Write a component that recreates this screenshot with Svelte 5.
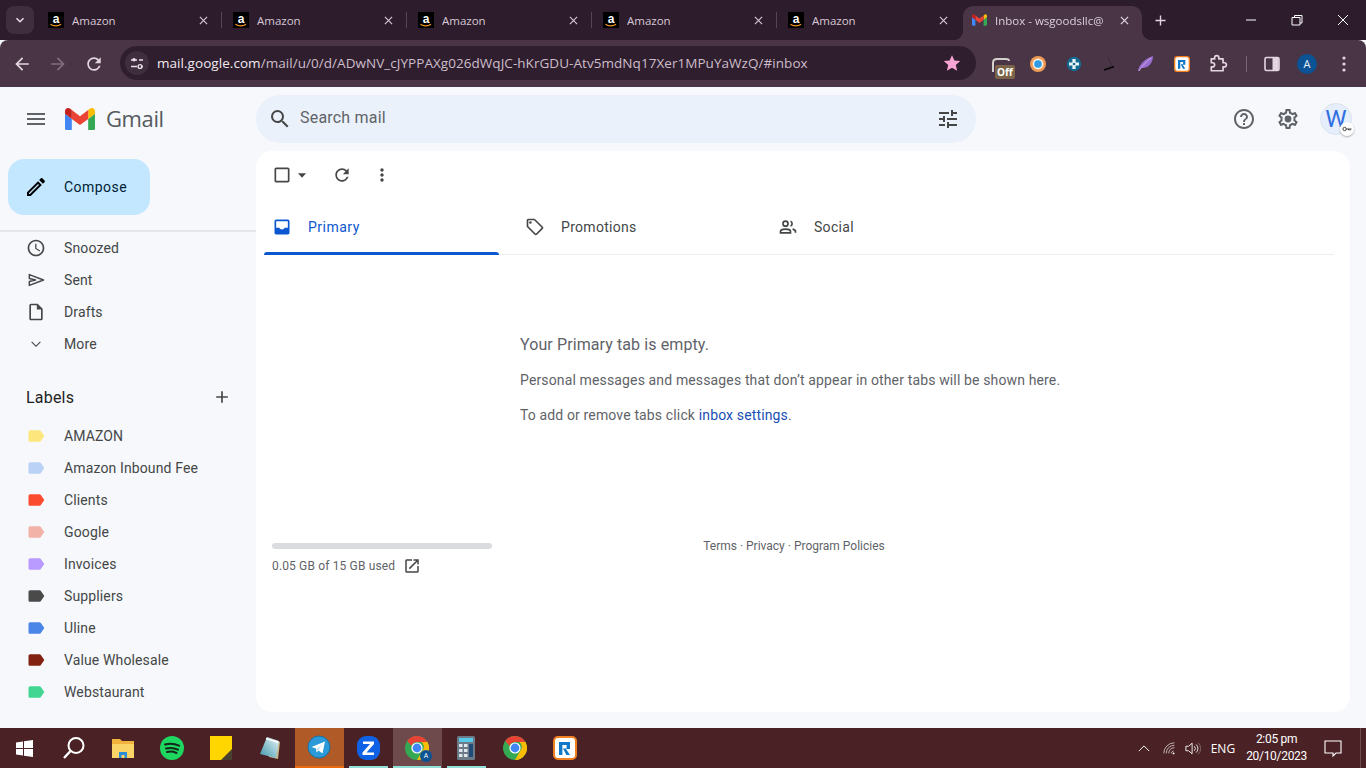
<script>
  const tabs = [1, 2, 3, 4, 5];
  const nav = [
    { t: 'Snoozed', d: 'M11.99 2C6.47 2 2 6.48 2 12s4.47 10 9.99 10C17.52 22 22 17.52 22 12S17.52 2 11.99 2zM12 20c-4.42 0-8-3.58-8-8s3.58-8 8-8 8 3.58 8 8-3.58 8-8 8zm.5-13H11v6l5.25 3.15.75-1.23-4.5-2.67z', fill: '#444746' },
    { t: 'Sent', d: 'M4 5.500 21 12 4 18.500V13.800l7.500-1.800L4 10.200z', fill: 'none' },
    { t: 'Drafts', d: 'M14 2H6c-1.1 0-2 .9-2 2v16c0 1.1.89 2 1.99 2H18c1.1 0 2-.9 2-2V8l-6-6zM6 20V4h7v5h5v11H6z', fill: '#444746' },
    { t: 'More', d: 'M16.800 9 12 13.800 7.200 9 6.300 9.900l5.700 5.700 5.700-5.700z', fill: '#444746' }
  ];
  const labels = [
    ['AMAZON', '#fde67c'], ['Amazon Inbound Fee', '#b9d2f6'], ['Clients', '#fb4c2f'], ['Google', '#f2b2a8'],
    ['Invoices', '#b99aff'], ['Suppliers', '#4a4a4a'], ['Uline', '#4a86e8'], ['Value Wholesale', '#822111'], ['Webstaurant', '#43d692']
  ];
  const labelPath = 'M17.63 5.84C17.27 5.33 16.67 5 16 5L5 5.01C3.9 5.01 3 5.9 3 7v10c0 1.1.9 1.99 2 1.99L16 19c.67 0 1.27-.33 1.63-.84L22 12l-4.37-6.16z';
</script>

{#snippet amazon()}
  <svg class="fav" viewBox="0 0 16 16">
    <rect width="16" height="16" fill="#000" />
    <text x="8" y="11" text-anchor="middle" class="az">a</text>
    <path d="M2.500 12.300c3 2.200 7.500 2.200 10.500 0" fill="none" stroke="#f79a1e" stroke-width="1.300" />
  </svg>
{/snippet}

{#snippet gmailM(cls)}
  <svg class={cls} viewBox="52 42 88 66">
    <path fill="#4285f4" d="M58 108h14V74L52 59v43c0 3.32 2.69 6 6 6" />
    <path fill="#34a853" d="M120 108h14c3.32 0 6-2.69 6-6V59l-20 15" />
    <path fill="#fbbc04" d="M120 48v26l20-15v-8c0-7.42-8.47-11.65-14.4-7.2" />
    <path fill="#ea4335" d="M72 74V48l24 18 24-18v26L96 92" />
    <path fill="#c5221f" d="M52 51v8l20 15V48l-5.6-4.2c-5.94-4.45-14.4-.22-14.4 7.2" />
  </svg>
{/snippet}

{#snippet chrome()}
  <svg class="tb-icon" viewBox="0 0 24 24">
    <circle cx="12" cy="12" r="12" fill="#34a853" />
    <path d="M12 0a12 12 0 0 1 10.4 6H12a6 6 0 0 0-5.6 3.8L2.2 5A12 12 0 0 1 12 0z" fill="#ea4335" />
    <path d="M22.4 6A12 12 0 0 1 12 24l5.2-9a6 6 0 0 0-.8-9z" fill="#fbbc04" />
    <circle cx="12" cy="12" r="5.600" fill="#fff" />
    <circle cx="12" cy="12" r="4.400" fill="#4285f4" />
  </svg>
{/snippet}

{#snippet rLogo(cls)}
  <svg class={cls} viewBox="0 0 24 24">
    <rect x="1" y="1" width="22" height="22" rx="4" fill="#fff" stroke="#f08020" stroke-width="2" />
    <path d="M6 19V6h11v7h-4l4 6h-3.600L10 12.400h3.600V9H9.400v10z" fill="#0f78c8" />
  </svg>
{/snippet}

<div class="screen">
  <div class="tabstrip">
    <button class="tab-search" aria-label="Search tabs">
      <svg class="i10" viewBox="0 0 10 10"><path d="M1.500 3.200 5 6.700l3.500-3.500" fill="none" stroke="#e8dce6" stroke-width="1.600" /></svg>
    </button>
    {#each tabs as t}
      <div class="tab">
        {@render amazon()}
        <span class="tab-title">Amazon</span>
        <svg class="x" viewBox="0 0 10 10"><path d="M1 1l8 8M9 1l-8 8" stroke="#d6c6d3" stroke-width="1.300" /></svg>
      </div>
    {/each}
    <div class="tab active">
      {@render gmailM('fav-m')}
      <span class="tab-title">Inbox - wsgoodsllc@</span>
      <svg class="x" viewBox="0 0 10 10"><path d="M1 1l8 8M9 1l-8 8" stroke="#e4d6e1" stroke-width="1.300" /></svg>
    </div>
    <svg class="newtab" viewBox="0 0 12 12"><path d="M6 .5v11M.5 6h11" stroke="#e4d6e1" stroke-width="1.500" /></svg>
    <div class="winctl">
      <svg class="ctl" viewBox="0 0 12 12"><path d="M1 6h10" stroke="#fff" stroke-width="1" /></svg>
      <svg class="ctl" viewBox="0 0 12 12"><path d="M3.500 3V1.500h7.500V9H9M1 3.500h8v7.500H1z" fill="none" stroke="#fff" stroke-width="1" /></svg>
      <svg class="ctl" viewBox="0 0 12 12"><path d="M1 1l10 10M11 1L1 11" stroke="#fff" stroke-width="1" /></svg>
    </div>
  </div>

  <div class="toolbar">
    <div class="navbtns">
      <svg class="tool" viewBox="0 0 24 24"><path d="M20 11H7.830l5.590-5.590L12 4l-8 8 8 8 1.410-1.410L7.830 13H20v-2z" fill="#e4d6e1" /></svg>
      <svg class="tool" viewBox="0 0 24 24"><path d="M12 4l-1.410 1.410L16.170 11H4v2h12.170l-5.580 5.590L12 20l8-8z" fill="#7f6c7c" /></svg>
      <svg class="tool" viewBox="0 0 24 24"><path d="M17.650 6.350C16.200 4.900 14.210 4 12 4c-4.420 0-7.990 3.580-7.990 8s3.570 8 7.990 8c3.730 0 6.840-2.550 7.730-6h-2.080c-.82 2.330-3.040 4-5.650 4-3.310 0-6-2.690-6-6s2.690-6 6-6c1.660 0 3.140.69 4.220 1.780L13 11h7V4l-2.350 2.350z" fill="#e4d6e1" /></svg>
    </div>
    <div class="omnibox">
      <span class="site">
        <svg class="i16" viewBox="0 0 16 16"><path d="M2 5h6M2 11.500h6M12 11.500h2" stroke="#eadfe8" stroke-width="1.500" /><circle cx="5" cy="4.800" r="1.700" fill="#eadfe8" /><circle cx="11" cy="11.500" r="1.900" fill="none" stroke="#eadfe8" stroke-width="1.400" /><path d="M10 5h4" stroke="#eadfe8" stroke-width="1.500" /></svg>
      </span>
      <span class="url"><b>mail.google.com</b>/mail/u/0/d/ADwNV_cJYPPAXg026dWqJC-hKrGDU-Atv5mdNq17Xer1MPuYaWzQ/#inbox</span>
      <svg class="star" viewBox="0 0 24 24"><path d="M12 1.500l3.200 7.100 7.700.8-5.800 5.200 1.700 7.600L12 18.300l-6.800 3.900 1.700-7.600L1.100 9.400l7.700-.8z" fill="#f8a5d6" /></svg>
    </div>
    <div class="exts">
      <span class="ext off">
        <svg class="i20" viewBox="0 0 20 20"><path d="M1 16V7q0-4 4-4h9q3 0 3 2" fill="none" stroke="#d4d0cc" stroke-width="2" /></svg>
        <span class="offbadge">Off</span>
      </span>
      <span class="ext"><svg class="i18" viewBox="0 0 18 18"><circle cx="9" cy="9" r="8" fill="#ee9a55" /><circle cx="9" cy="9" r="5.400" fill="#f8f0e2" /><circle cx="9" cy="9" r="3.800" fill="#2e9be6" /></svg></span>
      <span class="ext"><svg class="i16" viewBox="0 0 16 16"><circle cx="8" cy="8" r="7.200" fill="#156a92" /><path d="M6.400 3h3.200v3.400H13v3.200H9.600V13H6.400V9.600H3V6.400h3.400z" fill="#eaf4f8" /><circle cx="8" cy="8" r="1.300" fill="#156a92" /></svg></span>
      <span class="ext"><svg class="i18" viewBox="0 0 18 18"><path d="M7 2l3.500 8.500" stroke="#3a2a38" stroke-width="1" /><path d="M3 15l10-3.500" stroke="#000" stroke-width="1.500" /></svg></span>
      <span class="ext"><svg class="i18" viewBox="0 0 18 18"><path d="M1 16C2 9 9 3 16 1c0 4-2 9-6 11-2 1-5 1-6 1l-2 3z" fill="#9a6cd0" /><path d="M2 16C5 11 9 7 14 3" stroke="#d9c4ef" stroke-width=".7" fill="none" /></svg></span>
      <span class="ext">{@render rLogo('i16')}</span>
      <span class="ext"><svg class="tool" viewBox="1 0 24 24"><path d="M9 4.500a2.500 2.500 0 0 1 5 0V6h5v4.500h1.500a2.500 2.500 0 0 1 0 5H19V20H5v-4.500h1.500a2.500 2.500 0 0 0 0-5H5V6h4z" fill="none" stroke="#e4d6e1" stroke-width="2" stroke-linejoin="round" /></svg></span>
    </div>
    <span class="tsep"></span>
    <svg class="panel" viewBox="0 0 16 16"><rect x="1" y="1.500" width="14" height="13" rx="1.500" fill="none" stroke="#e4d6e1" stroke-width="1.600" /><rect x="8.500" y="2" width="6" height="12" fill="#e4d6e1" /></svg>
    <span class="avatar">A</span>
    <svg class="dots" viewBox="0 0 4 16"><circle cx="2" cy="2" r="1.600" fill="#e4d6e1" /><circle cx="2" cy="8" r="1.600" fill="#e4d6e1" /><circle cx="2" cy="14" r="1.600" fill="#e4d6e1" /></svg>
  </div>

  <div class="gmail">
    <header class="brand">
      <svg class="i24 menu" viewBox="0 0 24 24"><path d="M3 18h18v-2H3v2zm0-5h18v-2H3v2zm0-7v2h18V6H3z" fill="#5f6368" /></svg>
      {@render gmailM('logo')}
      <span class="wordmark">Gmail</span>
    </header>
    <div class="topbar">
      <div class="searchbox">
        <svg class="i24" viewBox="0 0 24 24"><path d="M15.500 14h-.79l-.28-.27A6.471 6.471 0 0 0 16 9.500 6.500 6.500 0 1 0 9.500 16c1.610 0 3.090-.59 4.230-1.570l.27.280v.790l5 4.990L20.490 19l-4.990-5zm-6 0C7.010 14 5 11.990 5 9.500S7.010 5 9.500 5 14 7.010 14 9.500 11.990 14 9.500 14z" fill="#444746" /></svg>
        <span class="placeholder">Search mail</span>
        <svg class="i24" viewBox="0 0 24 24"><path d="M3 17v2h6v-2H3zM3 5v2h10V5H3zm10 16v-2h8v-2h-8v-2h-2v6h2zM7 9v2H3v2h4v2h2V9H7zm14 4v-2H11v2h10zm-6-4h2V7h4V5h-4V3h-2v6z" fill="#444746" /></svg>
      </div>
      <div class="account">
        <svg class="i24" viewBox="0 0 24 24"><path d="M11 18h2v-2h-2v2zm1-16C6.480 2 2 6.480 2 12s4.480 10 10 10 10-4.480 10-10S17.520 2 12 2zm0 18c-4.410 0-8-3.590-8-8s3.590-8 8-8 8 3.590 8 8-3.590 8-8 8zm0-14c-2.210 0-4 1.790-4 4h2c0-1.100.9-2 2-2s2 .9 2 2c0 2-3 1.750-3 5h2c0-2.250 3-2.500 3-5 0-2.210-1.790-4-4-4z" fill="#5f6368" /></svg>
        <svg class="i24" viewBox="0 0 24 24"><path d="M19.430 12.980c.04-.32.070-.64.070-.98 0-.34-.03-.66-.07-.98l2.110-1.650c.19-.15.24-.42.12-.64l-2-3.460c-.09-.16-.26-.25-.44-.25-.06 0-.12.01-.17.03l-2.490 1c-.52-.4-1.080-.73-1.690-.98l-.38-2.650C14.460 2.180 14.250 2 14 2h-4c-.25 0-.46.18-.49.42l-.38 2.650c-.61.25-1.170.59-1.690.98l-2.490-1c-.06-.02-.12-.03-.18-.03-.17 0-.34.09-.43.25l-2 3.460c-.13.22-.07.49.12.64l2.110 1.650c-.04.32-.07.65-.07.98 0 .33.03.66.07.98l-2.110 1.650c-.19.15-.24.42-.12.64l2 3.460c.09.16.26.25.44.25.06 0 .12-.01.17-.03l2.490-1c.52.4 1.080.73 1.690.98l.38 2.650c.03.24.24.42.49.42h4c.25 0 .46-.18.49-.42l.38-2.650c.61-.25 1.170-.59 1.690-.98l2.490 1c.06.02.12.03.18.03.17 0 .34-.09.43-.25l2-3.460c.12-.22.07-.49-.12-.64l-2.110-1.650zm-1.980-1.710c.04.31.05.52.05.73 0 .21-.02.43-.05.73l-.14 1.130.89.7 1.080.84-.7 1.210-1.270-.51-1.040-.42-.9.68c-.43.32-.84.56-1.250.73l-1.060.43-.16 1.130-.2 1.350h-1.400l-.19-1.350-.16-1.130-1.060-.43c-.43-.18-.83-.41-1.230-.71l-.91-.7-1.060.43-1.270.51-.7-1.210 1.080-.84.89-.7-.14-1.130c-.03-.31-.05-.54-.05-.74s.02-.43.05-.73l.14-1.130-.89-.7-1.080-.84.7-1.210 1.270.51 1.040.42.9-.68c.43-.32.84-.56 1.250-.73l1.060-.43.16-1.130.2-1.350h1.390l.19 1.350.16 1.130 1.060.43c.43.18.83.41 1.230.71l.91.7 1.060-.43 1.270-.51.7 1.210-1.070.85-.89.7.14 1.130z" fill="#5f6368" /><circle cx="12" cy="12" r="3.400" fill="#5f6368" /></svg>
        <span class="wavatar">W
          <span class="keybadge"><svg class="i10" viewBox="0 0 10 10"><circle cx="2.600" cy="5" r="1.700" fill="none" stroke="#444" stroke-width="1" /><path d="M4.300 5H9.500M8 5v1.500M6.500 5v1.200" stroke="#444" stroke-width="1" fill="none" /></svg></span>
        </span>
      </div>
    </div>

    <aside class="sidebar">
      <button class="compose">
        <svg class="i24" viewBox="0 0 24 24"><path d="M3 17.250V21h3.750L17.810 9.940l-3.750-3.750L3 17.250zM5.920 19H5v-.92l9.060-9.060.92.92L5.920 19zM20.710 5.630l-2.340-2.340c-.2-.2-.45-.29-.71-.29s-.51.1-.7.29l-1.830 1.830 3.750 3.750 1.830-1.830c.39-.39.39-1.020 0-1.410z" fill="#000" /></svg>
        <span>Compose</span>
      </button>
      <div class="sidesep"></div>
      <nav class="navlist">
        {#each nav as n}
          <div class="row">
            <svg class="i20" viewBox="0 0 24 24"><path d={n.d} fill={n.fill} stroke={n.fill === 'none' ? '#444746' : 'none'} stroke-width="1.800" stroke-linejoin="round" /></svg>
            <span>{n.t}</span>
          </div>
        {/each}
      </nav>
      <div class="labelhead">
        <span>Labels</span>
        <svg class="i20" viewBox="0 0 24 24"><path d="M19 13h-6v6h-2v-6H5v-2h6V5h2v6h6v2z" fill="#444746" /></svg>
      </div>
      <div class="labellist">
        {#each labels as l}
          <div class="row">
            <svg class="i20" viewBox="0 0 24 24"><path d={labelPath} fill={l[1]} /></svg>
            <span>{l[0]}</span>
          </div>
        {/each}
      </div>
    </aside>

    <main class="card">
      <div class="actions">
        <svg class="i20" viewBox="0 0 24 24"><path d="M19 5v14H5V5h14m0-2H5c-1.100 0-2 .9-2 2v14c0 1.100.9 2 2 2h14c1.100 0 2-.9 2-2V5c0-1.100-.9-2-2-2z" fill="#444746" /></svg>
        <svg class="caret" viewBox="0 0 10 5"><path d="M0 0h9L4.500 5z" fill="#444746" /></svg>
        <svg class="i20 refresh" viewBox="0 0 24 24"><path d="M17.650 6.350C16.200 4.900 14.210 4 12 4c-4.420 0-7.990 3.580-7.990 8s3.570 8 7.990 8c3.730 0 6.840-2.550 7.730-6h-2.080c-.82 2.330-3.040 4-5.650 4-3.310 0-6-2.690-6-6s2.690-6 6-6c1.660 0 3.140.69 4.220 1.780L13 11h7V4l-2.350 2.350z" fill="#444746" /></svg>
        <svg class="i20 more" viewBox="0 0 24 24"><path d="M12 8c1.100 0 2-.9 2-2s-.9-2-2-2-2 .9-2 2 .9 2 2 2zm0 2c-1.100 0-2 .9-2 2s.9 2 2 2 2-.9 2-2-.9-2-2-2zm0 6c-1.100 0-2 .9-2 2s.9 2 2 2 2-.9 2-2-.9-2-2-2z" fill="#444746" /></svg>
      </div>
      <div class="mailtabs">
        <div class="mailtab sel">
          <svg class="i20" viewBox="0 0 24 24"><path d="M19 3H5c-1.100 0-2 .9-2 2v14c0 1.100.9 2 2 2h14c1.100 0 2-.9 2-2V5c0-1.100-.9-2-2-2zm0 10h-4c0 1.660-1.350 2-3 2s-3-.34-3-2H5V5h14v8z" fill="#0b57d0" /></svg>
          <span>Primary</span>
        </div>
        <div class="mailtab">
          <svg class="i20" viewBox="0 0 24 24"><path d="M21.410 11.580l-9-9C12.050 2.220 11.550 2 11 2H4c-1.100 0-2 .9-2 2v7c0 .55.22 1.050.59 1.420l9 9c.36.36.86.58 1.410.58s1.050-.22 1.410-.59l7-7c.37-.36.59-.86.59-1.410s-.23-1.060-.59-1.420zM13 20.010L4 11V4h7v-.01l9 9-7 7.020z" fill="#444746" /><circle cx="6.500" cy="6.500" r="1.500" fill="#444746" /></svg>
          <span>Promotions</span>
        </div>
        <div class="mailtab">
          <svg class="i20" viewBox="0 0 24 24"><circle cx="9" cy="8" r="3" fill="none" stroke="#444746" stroke-width="2" /><path d="M3 19v-1.500c0-2 3.500-3 6-3s6 1 6 3V19z" fill="none" stroke="#444746" stroke-width="2" /><path d="M15 5.200a3 3 0 0 1 0 5.600M17.500 14.600c2 .4 3.500 1.300 3.500 2.900V19" fill="none" stroke="#444746" stroke-width="2" /></svg>
          <span>Social</span>
        </div>
      </div>
      <div class="empty">
        <h2>Your Primary tab is empty.</h2>
        <p>Personal messages and messages that don’t appear in other tabs will be shown here.</p>
        <p class="p2">To add or remove tabs click <a href="#settings">inbox settings</a>.</p>
      </div>
      <footer class="foot">
        <div class="storage">
          <div class="bar"></div>
          <div class="used">
            <span>0.05 GB of 15 GB used</span>
            <svg class="i18" viewBox="0 0 24 24"><path d="M19 19H5V5h7V3H5c-1.100 0-2 .9-2 2v14c0 1.100.9 2 2 2h14c1.100 0 2-.9 2-2v-7h-2v7zM14 3v2h3.590l-9.830 9.830 1.410 1.410L19 6.410V10h2V3h-7z" fill="#444746" /></svg>
          </div>
        </div>
        <div class="terms">Terms · Privacy · Program Policies</div>
      </footer>
    </main>
  </div>

  <div class="taskbar">
    <div class="tb-left">
      <span class="tb"><svg class="tb-win" viewBox="0 0 17 17"><path d="M0 2.400 7 1.400v6.500H0zM8 1.300 17 0v7.900H8zM0 9h7v6.600l-7-1zM8 9h9v8l-9-1.300z" fill="#fff" /></svg></span>
      <span class="tb"><svg class="tb-icon" viewBox="0 0 24 24"><circle cx="14" cy="9.500" r="7.500" fill="none" stroke="#fff" stroke-width="2" /><path d="M8.500 15 2 22" stroke="#fff" stroke-width="2.400" /></svg></span>
      <span class="tb"><svg class="tb-icon" viewBox="0 0 24 24"><path d="M1 3h8l2 2h12v17H1z" fill="#f2b33d" /><path d="M1 8h22v14H1z" fill="#fbd468" /><path d="M8 22v-6h8v6h-2.500v-3h-3v3z" fill="#2b8fd8" /></svg></span>
      <span class="tb"><svg class="tb-icon" viewBox="0 0 24 24"><circle cx="12" cy="12" r="12" fill="#1ed760" /><path d="M5 8.500c4.500-1.300 9.500-1 14 1.200M6 12.500c4-1 8-.7 12 1.100M7 16c3.200-.7 6.500-.4 9.500 1" fill="none" stroke="#14251a" stroke-width="2" stroke-linecap="round" /></svg></span>
      <span class="tb"><svg class="tb-icon" viewBox="0 0 24 24"><rect x="1" y="0" width="22" height="24" fill="#ffd600" /><path d="M23 13v11H12z" fill="#4a4030" /></svg></span>
      <span class="tb"><svg class="tb-icon" viewBox="0 0 24 24"><defs><linearGradient id="np" x1="0" y1="1" x2="1" y2="0"><stop offset="0" stop-color="#3f98ad" /><stop offset="1" stop-color="#e8f4f6" /></linearGradient></defs><path d="M9 2l13 4-2 17-9-2z" fill="#c9b98a" /><path d="M9 1l12 4-3 17L2 18z" fill="url(#np)" /><path d="M8 2.500l12 3.800" stroke="#fff" stroke-width="1.500" /></svg></span>
      <span class="tb open-active"><svg class="tb-icon" viewBox="0 0 24 24"><circle cx="12" cy="12" r="11" fill="#2a9bd8" stroke="#1b6f9e" stroke-width="1" /><path d="M4.500 12 18 6.500l-2.500 12-4-3-2 2-.5-4z" fill="#fff" /><path d="M9 14.500 15.500 9l-5 6.500z" fill="#b7dcef" /></svg></span>
      <span class="tb open"><svg class="tb-icon" viewBox="0 0 24 24"><rect x="1" y="0" width="23" height="24" rx="9" fill="#0f62e6" /><path d="M7 5.500h11v2.500l-7.500 8.500H18V19H6.500v-2.500L14 8H7z" fill="#fff" /></svg></span>
      <span class="tb running">{@render chrome()}<span class="profile">A</span></span>
      <span class="tb open"><svg class="tb-icon" viewBox="0 0 24 24"><rect x="3" y="0" width="18" height="24" rx="1.500" fill="#6b7a86" /><rect x="5" y="2" width="14" height="4" fill="#57c8e8" /><path d="M5 8h3.500v3H5zM10 8h3.500v3H10zM5 13h3.500v3H5zM10 13h3.500v3H10zM5 18h3.500v3H5zM10 18h3.500v3H10z" fill="#dfe7ec" /><rect x="15" y="8" width="4" height="13" fill="#204a78" /></svg></span>
      <span class="tb">{@render chrome()}</span>
      <span class="tb">{@render rLogo('tb-icon')}</span>
    </div>
    <div class="tray">
      <svg class="chev" viewBox="0 0 14 8"><path d="M1 7l6-6 6 6" fill="none" stroke="#fff" stroke-width="1.100" /></svg>
      <svg class="wifi" viewBox="0 0 16 16"><path d="M1 14A13 13 0 0 1 14 1M4 14A10 10 0 0 1 14 4M7 14a7 7 0 0 1 7-7M10 14a4 4 0 0 1 3-3" fill="none" stroke="#dcd2d2" stroke-width="1" /><circle cx="13" cy="14" r="1.200" fill="#fff" /></svg>
      <svg class="vol" viewBox="0 0 18 16"><path d="M1 5.500h3l4-3.500v12l-4-3.500H1z" fill="none" stroke="#fff" stroke-width="1" /><path d="M10.500 5.500a3.500 3.500 0 0 1 0 5M12.500 3.500a6 6 0 0 1 0 9" fill="none" stroke="#fff" stroke-width="1" /><path d="M14.800 1.500a9 9 0 0 1 0 13" fill="none" stroke="#8a7072" stroke-width="1" /></svg>
      <span class="eng">ENG</span>
      <span class="clock"><span>2:05 pm</span><span>20/10/2023</span></span>
      <span class="notif"><svg class="bell" viewBox="0 0 18 18"><path d="M1 2h16v12h-5l-3 3v-3H1z" fill="none" stroke="#fff" stroke-width="1.100" /></svg></span>
    </div>
  </div>
</div>

<style>
  :global(body) { margin: 0; background: #f6f8fc; }
  .screen { width: 1366px; height: 768px; display: flex; flex-direction: column; overflow: hidden; font-family: Roboto, "Liberation Sans", sans-serif; }
  svg { display: block; flex: none; }
  .i10 { width: 10px; height: 10px; }
  .i16 { width: 16px; height: 16px; }
  .i18 { width: 18px; height: 18px; }
  .i20 { width: 20px; height: 20px; }
  .i24 { width: 24px; height: 24px; }

  .tabstrip { height: 40px; background: #2c1c2c; display: flex; align-items: flex-end; padding-left: 6px; box-sizing: border-box; font-family: "Open Sans", "Noto Sans", sans-serif; }
  .tab-search { width: 28px; height: 28px; border: 0; padding: 0; margin: 0 3px 6px 0; border-radius: 8px; background: #3f2e3e; display: flex; align-items: center; justify-content: center; }
  .tab { width: 185px; height: 34px; box-sizing: border-box; display: flex; align-items: center; padding: 0 14px 6px 11px; position: relative; color: #d9c8d5; }
  .tab:not(.active)::after { content: ""; position: absolute; right: 0; top: 6px; height: 16px; width: 1px; background: #56445a; }
  .tab:nth-child(6)::after { display: none; }
  .fav { width: 16px; height: 16px; margin-right: 8px; }
  .az { fill: #fff; font: 700 12px "Liberation Sans", sans-serif; }
  .fav-m { width: 15px; height: 12px; margin-right: 8px; }
  .tab-title { flex: 1; font-size: 11.500px; font-weight: 500; white-space: nowrap; overflow: hidden; }
  .x { width: 9px; height: 9px; }
  .active { width: 179px; margin-left: 1px; background: #4a3547; border-radius: 10px 10px 0 0; padding: 0 13px 6px 9px; color: #e6d9e3; }
  .active::before, .active::after { content: ""; position: absolute; bottom: 0; width: 10px; height: 10px; }
  .active::before { left: -10px; background: radial-gradient(circle at 0 0, transparent 10px, #4a3547 10.500px); }
  .active::after { right: -10px; background: radial-gradient(circle at 100% 0, transparent 10px, #4a3547 10.500px); }
  .active .tab-title { color: #dccfd9; mask-image: linear-gradient(90deg, #000 85%, transparent); }
  .newtab { width: 11px; height: 11px; margin: 0 0 14px 13px; }
  .winctl { margin-left: auto; display: flex; height: 40px; align-items: center; padding-right: 17px; gap: 34px; }
  .ctl { width: 12px; height: 12px; }

  .toolbar { height: 47px; background: #4a3547; border-radius: 8px 8px 0 0; display: flex; align-items: center; box-sizing: border-box; padding-left: 10px; }
  .navbtns { display: flex; gap: 12px; width: 110px; }
  .tool { width: 24px; height: 24px; transform: scale(.84); }
  .omnibox { width: 856px; height: 34px; margin-top: -1px; border-radius: 17px; background: #2f1f2e; display: flex; align-items: center; box-sizing: border-box; padding: 0 15px 0 5px; font-family: "Open Sans", "Noto Sans", sans-serif; }
  .site { width: 24px; height: 24px; border-radius: 50%; background: #3f2e3e; display: flex; align-items: center; justify-content: center; margin-right: 8px; }
  .url { flex: 1; font-size: 13.500px; letter-spacing: .05px; color: #cdbdca; white-space: nowrap; }
  .url b { font-weight: 400; color: #f2e9f0; }
  .star { width: 18px; height: 18px; }
  .exts { display: flex; margin-left: 8px; align-items: center; }
  .ext { width: 36px; height: 32px; display: flex; align-items: center; justify-content: center; position: relative; }
  .off { padding-top: 4px; box-sizing: border-box; }
  .offbadge { position: absolute; left: 11px; top: 17px; padding: 0 2px; background: #7b6448; color: #fff; border-radius: 2px; font: 700 10px/14px "Open Sans", sans-serif; }
  .tsep { width: 1px; height: 16px; background: #7a6577; margin: 0 17px 0 10px; }
  .panel { width: 16px; height: 16px; margin-right: 17px; }
  .avatar { width: 20px; height: 20px; border-radius: 50%; background: #0b5394; color: #e8f0fa; font: 400 11px/20px "Open Sans", sans-serif; text-align: center; margin-right: 25px; }
  .dots { width: 4px; height: 16px; }

  .gmail { height: 641px; background: #f6f8fc; display: grid; grid-template-columns: 256px 1fr; grid-template-rows: 64px 1fr; color: #444746; }
  .brand { display: flex; align-items: center; padding-left: 24px; }
  .menu { margin-right: 17px; }
  .logo { width: 30px; height: 22.500px; margin-right: 11px; }
  .wordmark { font: 400 22px "Open Sans", Roboto, sans-serif; color: #555a5f; letter-spacing: -.4px; margin-bottom: 2px; }
  .topbar { display: flex; align-items: center; justify-content: space-between; padding: 0 14px 0 0; }
  .searchbox { width: 720px; height: 48px; border-radius: 24px; background: #eaf1fb; display: flex; align-items: center; padding: 0 16px 0 12px; box-sizing: border-box; }
  .placeholder { flex: 1; margin: 0 0 3px 8px; font-size: 16px; color: #5f6368; letter-spacing: .2px; }
  .account { display: flex; align-items: center; gap: 20px; }
  .wavatar { width: 32px; height: 32px; border-radius: 50%; background: #e6eefc; border: 1px solid #dbe4f2; box-sizing: border-box; color: #2f6fe0; font: 400 24px/30px Roboto, sans-serif; text-align: center; position: relative; }
  .keybadge { position: absolute; right: -3px; bottom: -2px; width: 14px; height: 14px; border-radius: 50%; background: #fff; box-shadow: 0 1px 2px rgba(0,0,0,.3); display: flex; align-items: center; justify-content: center; }

  .sidebar { display: flex; flex-direction: column; font-size: 14px; }
  .compose { width: 142px; height: 56px; margin: 8px 0 0 8px; border: 0; border-radius: 16px; background: #c2e7ff; display: flex; align-items: center; padding: 0 0 0 16px; gap: 16px; color: #001d35; font: 400 14px Roboto, sans-serif; letter-spacing: .45px; }
  .sidesep { height: 2px; margin-top: 15px; background: #e4e6ea; }
  .row { height: 32px; display: flex; align-items: center; padding-left: 26px; gap: 18px; letter-spacing: .13px; color: #444746; }
  .labelhead { margin-top: 17px; height: 40px; display: flex; align-items: center; justify-content: space-between; padding: 0 24px 0 26px; font-size: 16px; color: #1f1f1f; letter-spacing: .2px; box-sizing: border-box; }
  .labellist { margin-top: 3px; }

  .card { margin: 0 16px 16px 0; background: #fff; border-radius: 16px; display: flex; flex-direction: column; padding: 0 16px 0 8px; }
  .actions { height: 48px; margin-bottom: 4px; display: flex; align-items: center; padding-left: 8px; }
  .caret { width: 9px; height: 5px; margin-left: 6px; }
  .refresh { margin-left: 25px; }
  .more { margin-left: 20px; }
  .mailtabs { height: 52px; display: flex; border-bottom: 1px solid #eceff1; box-sizing: border-box; }
  .mailtab { width: 253px; display: flex; align-items: center; gap: 16px; padding: 0 0 4px 8px; box-sizing: border-box; font-size: 14px; letter-spacing: .3px; position: relative; }
  .sel { color: #0b57d0; letter-spacing: .5px; }
  .sel::after { content: ""; position: absolute; left: 0; bottom: -1px; width: 235px; height: 3px; background: #0b57d0; border-radius: 3px 3px 0 0; }
  .empty { padding: 80px 0 0 256px; }
  h2 { margin: 0; font: 400 16px/20px Roboto, sans-serif; color: #5f6368; letter-spacing: .1px; }
  p { margin: 15px 0 0; font-size: 14px; line-height: 20px; color: #5f6368; letter-spacing: .14px; }
  .p2 { margin-top: 15px; }
  a { color: #1a4fb4; text-decoration: none; }
  .foot { display: flex; margin-top: 118px; padding-left: 8px; font-size: 12px; color: #5f6368; }
  .storage { width: 220px; }
  .bar { height: 6px; border-radius: 3px; background: #dadce0; }
  .used { display: flex; align-items: center; gap: 8px; margin-top: 8px; letter-spacing: .15px; }
  .terms { width: 604px; text-align: center; margin-top: -4px; }

  .taskbar { height: 40px; background: #4a2226; display: flex; justify-content: space-between; font-family: "Open Sans", "Noto Sans", sans-serif; color: #fff; }
  .tb-left { display: flex; }
  .tb { width: 49.100px; height: 40px; display: flex; align-items: center; justify-content: center; position: relative; box-sizing: border-box; }
  .tb-win { width: 17px; height: 17px; }
  .tb-icon { width: 24px; height: 24px; }
  .open-active { background: #b05a28; border-bottom: 2px solid #ea6a10; }
  .open::after { content: ""; position: absolute; left: 5px; right: 5px; bottom: 0; height: 2px; background: #93e0d8; }
  .running { background: #6e4a4c; }
  .running::after { content: ""; position: absolute; left: 0; right: 1px; bottom: 0; height: 2px; background: #93e0d8; }
  .profile { position: absolute; right: 10px; bottom: 6px; width: 12px; height: 12px; border-radius: 50%; background: #0b5394; font-size: 7px; line-height: 12px; text-align: center; }
  .tray { display: flex; align-items: center; font-size: 12px; margin-right: 5px; }
  .chev { width: 12px; height: 7px; margin-right: 13px; }
  .wifi { width: 13px; height: 13px; margin-right: 9px; }
  .vol { width: 16px; height: 15px; margin-right: 10px; }
  .eng { margin-right: 11px; }
  .clock { display: flex; flex-direction: column; align-items: center; margin-right: 14px; font: 400 12px/17px Roboto, sans-serif; letter-spacing: -.3px; }
  .notif { width: 40px; box-sizing: border-box; height: 40px; border-right: 1px solid #6b4a4d; padding-left: 3px; display: flex; align-items: center; }
  .bell { width: 18px; height: 18px; }
</style>
